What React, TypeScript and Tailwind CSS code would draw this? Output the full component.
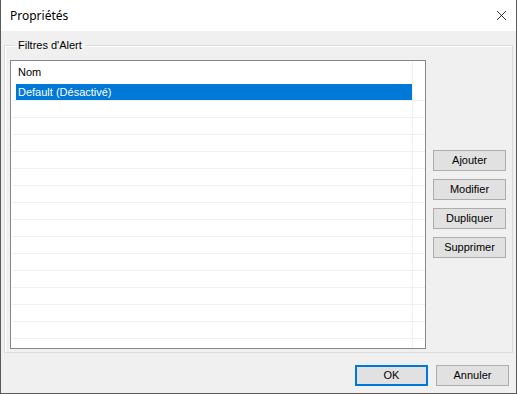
import { X } from 'lucide-react';

const ROW_COUNT = 16;

function WinButton({ label, primary }: { label: string; primary?: boolean }) {
    return (
        <button
            className={`w-[73px] h-[21px] bg-[#e1e1e1] text-[11px] text-black leading-none flex items-center justify-center
                ${primary ? 'border-2 border-[#0078d7]' : 'border border-[#adadad]'}`}
        >
            {label}
        </button>
    );
}

export default function App() {
    return (
        <div
            className="w-[517px] h-[394px] flex flex-col bg-[#f0f0f0] border border-t-0 border-[#5a5a5a] overflow-hidden"
            style={{ fontFamily: '"Liberation Sans", Arial, sans-serif' }}
        >
            {/* Title bar */}
            <div className="h-[31px] bg-white flex items-center justify-between shrink-0">
                <span className="pl-[9px] text-[12px] text-black" style={{ fontFamily: '"Noto Sans", sans-serif' }}>
                    Propriétés
                </span>
                <X size={17} strokeWidth={1.1} className="mr-[6px] text-black" />
            </div>

            {/* Group box */}
            <fieldset className="mx-[3px] mt-[8px] border border-[#dcdcdc] shadow-[inset_1px_1px_0_#fff] px-[5px] pt-[8px] pb-[3px] flex">
                <legend className="ml-[5px] px-[3px] text-[11px] text-black leading-[13px]">Filtres d'Alert</legend>
                <div className="flex items-center gap-[7px] w-full">
                    {/* List view */}
                    <div className="relative w-[416px] h-[289px] bg-white border border-[#828790] overflow-hidden text-[11px]">
                        <div className="absolute top-0 bottom-0 left-[401px] w-px bg-[#f0f0f0]" />
                        <div className="h-[23px] flex items-center pl-[7px] text-black">Nom</div>
                        <div className="flex flex-col pl-px">
                            {Array.from({ length: ROW_COUNT }).map((_, i) => (
                                <div key={i} className="h-[17px] border-b border-[#f0f0f0] flex">
                                    {i === 0 && (
                                        <div className="relative ml-[4px] w-[396px] h-[16px] bg-[#0078d7] text-white flex items-center pl-[2px]">
                                            Default (Désactivé)
                                        </div>
                                    )}
                                </div>
                            ))}
                        </div>
                    </div>

                    {/* Action buttons */}
                    <div className="flex flex-col gap-[8px] mt-[-2px]">
                        <WinButton label="Ajouter" />
                        <WinButton label="Modifier" />
                        <WinButton label="Dupliquer" />
                        <WinButton label="Supprimer" />
                    </div>
                </div>
            </fieldset>

            {/* Dialog buttons */}
            <div className="flex justify-end gap-[8px] pr-[7px] mt-[12px]">
                <WinButton label="OK" primary />
                <WinButton label="Annuler" />
            </div>
        </div>
    );
}
